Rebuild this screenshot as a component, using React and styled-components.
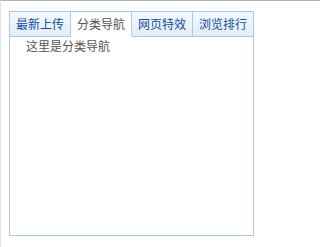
import React, { useState } from "react";
import styled, { createGlobalStyle } from "styled-components";

const GlobalStyle = createGlobalStyle`
  html, body {
    margin: 0;
    padding: 0;
    background: #fff;
  }
  body {
    font-family: "Noto Sans CJK SC", "Noto Sans", sans-serif;
    font-size: 12px;
  }
`;

const TABS = [
  { key: "new", label: "最新上传", body: "这里是最新上传" },
  { key: "nav", label: "分类导航", body: "这里是分类导航" },
  { key: "fx", label: "网页特效", body: "这里是网页特效" },
  { key: "rank", label: "浏览排行", body: "这里是浏览排行" }
];

export default function App() {
  const [active, setActive] = useState("nav");
  const current = TABS.find(t => t.key === active);
  return (
    <Page>
      <GlobalStyle />
      <Box>
        <TabBar>
          {TABS.map((t, i) => (
            <Tab
              key={t.key}
              $active={t.key === active}
              $first={i === 0}
              onClick={() => setActive(t.key)}
            >
              {t.label}
            </Tab>
          ))}
        </TabBar>
        <Panel>{current.body}</Panel>
      </Box>
    </Page>
  );
}

const Page = styled.div`
  min-height: 100vh;
  box-sizing: border-box;
  border-top: 1px solid #b3b3b3;
  border-left: 1px solid #e3e3e3;
  padding: 10px 0 0 8px;
`;

const Box = styled.div`
  width: 245px;
`;

const TabBar = styled.div`
  display: flex;
`;

const Tab = styled.div`
  flex: 1;
  height: 24px;
  line-height: 24px;
  text-align: center;
  cursor: pointer;
  border: 1px solid #a9c8ea;
  border-left: ${p => (p.$first ? "1px solid #a9c8ea" : "none")};
  border-bottom-color: ${p => (p.$active ? "#fff" : "#a9c8ea")};
  background: ${p =>
    p.$active ? "#fff" : "linear-gradient(#f4f8fd, #e2edf9)"};
  color: ${p => (p.$active ? "#555" : "#124e9c")};
`;

const Panel = styled.div`
  height: 199px;
  box-sizing: border-box;
  border: 1px solid #a9c8ea;
  border-top: none;
  padding: 0 16px;
  line-height: 18px;
  color: #555;
`;
